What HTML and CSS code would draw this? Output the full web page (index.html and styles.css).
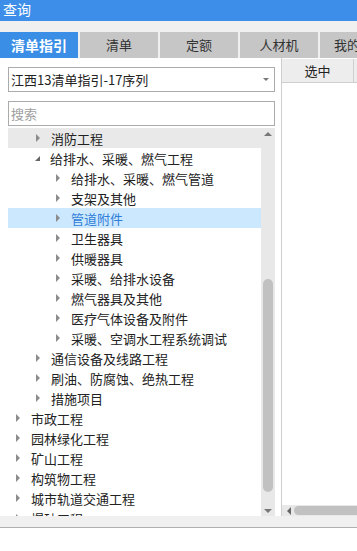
FILE: index.html
```html
<!DOCTYPE html>
<html lang="zh-CN">

<head>
    <meta charset="UTF-8">
    <title>查询</title>
    <link rel="stylesheet" href="styles.css">
</head>

<body>
    <div class="title">查询</div>
    <div class="tabs">
        <div class="tab active">清单指引</div>
        <div class="tab">清单</div>
        <div class="tab">定额</div>
        <div class="tab">人材机</div>
        <div class="tab last">我的</div>
    </div>
    <section class="main">
        <div class="left">
            <div class="select">
                <span>江西13清单指引-17序列</span>
                <i class="drop"></i>
            </div>
            <div class="search">搜索</div>
            <div class="tree">
                <ul class="list">
                    <li class="row hover lv1"><i class="arr"></i>消防工程</li>
                    <li class="row lv1"><i class="arr open"></i>给排水、采暖、燃气工程</li>
                    <li class="row lv2"><i class="arr"></i>给排水、采暖、燃气管道</li>
                    <li class="row lv2"><i class="arr"></i>支架及其他</li>
                    <li class="row lv2 selected"><i class="arr"></i>管道附件</li>
                    <li class="row lv2"><i class="arr"></i>卫生器具</li>
                    <li class="row lv2"><i class="arr"></i>供暖器具</li>
                    <li class="row lv2"><i class="arr"></i>采暖、给排水设备</li>
                    <li class="row lv2"><i class="arr"></i>燃气器具及其他</li>
                    <li class="row lv2"><i class="arr"></i>医疗气体设备及附件</li>
                    <li class="row lv2"><i class="arr"></i>采暖、空调水工程系统调试</li>
                    <li class="row lv1"><i class="arr"></i>通信设备及线路工程</li>
                    <li class="row lv1"><i class="arr"></i>刷油、防腐蚀、绝热工程</li>
                    <li class="row lv1"><i class="arr"></i>措施项目</li>
                    <li class="row lv0"><i class="arr"></i>市政工程</li>
                    <li class="row lv0"><i class="arr"></i>园林绿化工程</li>
                    <li class="row lv0"><i class="arr"></i>矿山工程</li>
                    <li class="row lv0"><i class="arr"></i>构筑物工程</li>
                    <li class="row lv0"><i class="arr"></i>城市轨道交通工程</li>
                    <li class="row lv0"><i class="arr"></i>爆破工程</li>
                </ul>
                <div class="vscroll">
                    <i class="up"></i>
                    <div class="thumb"></div>
                    <i class="down"></i>
                </div>
            </div>
        </div>
        <div class="right">
            <div class="head">
                <div class="cell">选中</div>
                <div class="cell"></div>
            </div>
            <div class="body"></div>
            <div class="hscroll">
                <i class="left-arr"></i>
                <div class="hthumb"></div>
            </div>
        </div>
    </section>
    <div class="status"></div>
</body>

</html>
```

FILE: styles.css
```css
* {
    margin: 0;
    padding: 0;
    box-sizing: border-box;
}

body {
    width: 357px;
    height: 551px;
    overflow: hidden;
    background: #fff;
    font-family: "Noto Sans CJK SC", "Liberation Sans", sans-serif;
    font-size: 13px;
    color: #222;
}

.title {
    height: 21px;
    line-height: 19px;
    padding-left: 3px;
    background: #3d8ee8;
    color: #fff;
    font-size: 14px;
}

.tabs {
    display: flex;
    gap: 2px;
    height: 37px;
    padding-top: 11px;
    background: #f0f0f0;
    overflow: hidden;
}

.tab {
    flex: 0 0 78px;
    height: 26px;
    line-height: 26px;
    text-align: center;
    background: #c6c6c6;
    color: #333;
}

.tab.last {
    flex: 0 0 54px;
}

.tab.active {
    background: #3a8ee6;
    color: #fff;
    font-weight: bold;
    font-size: 14px;
}

.main {
    display: flex;
    height: 458px;
}

.left {
    width: 281px;
    padding: 9px 6px 0 8px;
}

.select,
.search {
    height: 25px;
    border: 1px solid #ababab;
    line-height: 23px;
    padding-left: 2px;
}

.select {
    display: flex;
    justify-content: space-between;
    align-items: center;
    line-height: normal;
}

.drop {
    width: 0;
    height: 0;
    margin-right: 5px;
    border-left: 3px solid transparent;
    border-right: 3px solid transparent;
    border-top: 3px solid #777;
}

.search {
    margin-top: 9px;
    color: #a0a0a0;
}

.tree {
    display: flex;
    height: 388px;
    margin-top: 2px;
    overflow: hidden;
}

.list {
    flex: 1;
    list-style: none;
    overflow: hidden;
}

.row {
    display: flex;
    align-items: center;
    height: 20px;
    white-space: nowrap;
}

.row.hover {
    background: #e9e9e9;
}

.row.selected {
    background: #cce8ff;
    color: #2f7ed8;
}

.lv0 {
    padding-left: 8px;
}

.lv1 {
    padding-left: 28px;
}

.lv2 {
    padding-left: 48px;
}

.arr {
    width: 0;
    height: 0;
    margin-right: 11px;
    border-top: 4px solid transparent;
    border-bottom: 4px solid transparent;
    border-left: 4px solid #8c8c8c;
}

.arr.open {
    margin-left: -1px;
    margin-right: 10px;
    border-top: 5px solid transparent;
    border-bottom: 0;
    border-left: 0;
    border-right: 5px solid #666;
}

.vscroll {
    display: flex;
    flex-direction: column;
    align-items: center;
    width: 14px;
    background: #e8e8e8;
    padding: 4px 0 3px;
}

.up,
.down {
    width: 0;
    height: 0;
    border-left: 4px solid transparent;
    border-right: 4px solid transparent;
}

.up {
    border-bottom: 4px solid #777;
}

.down {
    border-top: 4px solid #777;
}

.thumb {
    width: 10px;
    height: 213px;
    margin: 143px 0 auto;
    border-radius: 5px;
    background: #c1c1c1;
}

.right {
    flex: 1;
    display: flex;
    flex-direction: column;
    border-left: 1px solid #cfcfcf;
    padding-top: 1px;
}

.head {
    display: flex;
    height: 24px;
}

.cell {
    flex: 0 0 72px;
    text-align: center;
    line-height: 23px;
    background: #ededed;
    border-right: 1px solid #cfcfcf;
    border-bottom: 1px solid #cfcfcf;
}

.cell+.cell {
    flex: 1;
    border-right: 0;
}

.body {
    flex: 1;
}

.hscroll {
    display: flex;
    align-items: center;
    height: 11px;
    background: #e8e8e8;
    padding-left: 5px;
}

.left-arr {
    width: 0;
    height: 0;
    margin-right: 3px;
    border-top: 4px solid transparent;
    border-bottom: 4px solid transparent;
    border-right: 4px solid #666;
}

.hthumb {
    flex: 1;
    height: 9px;
    border-radius: 5px 0 0 5px;
    background: #c1c1c1;
}

.status {
    height: 12px;
    background: #f0f0f0;
    border-bottom: 1px solid #b0b0b0;
}
```
